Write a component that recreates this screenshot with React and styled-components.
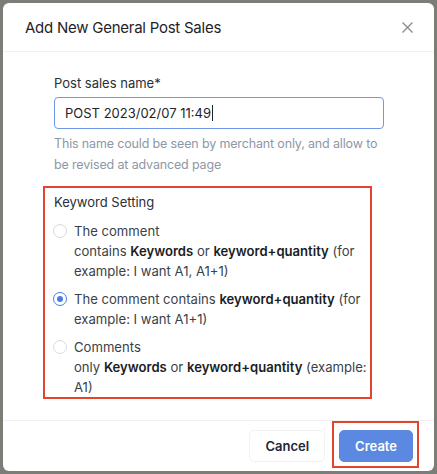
import React from "react";
import styled, { createGlobalStyle } from "styled-components";

const Global = createGlobalStyle`
  html, body { margin: 0; padding: 0; }
  body {
    background: #7d7d77;
    font-family: Inter, "Noto Sans", sans-serif;
    -webkit-font-smoothing: antialiased;
  }
`;

const Page = styled.div`
  width: 437px;
  height: 474px;
  box-sizing: border-box;
  padding: 3px 3px 3px 3px;
  display: flex;
`;

const Modal = styled.div`
  width: 431px;
  height: 468px;
  background: #ffffff;
  border-radius: 6px;
  display: flex;
  flex-direction: column;
  overflow: hidden;
`;

const Header = styled.div`
  height: 49px;
  box-sizing: border-box;
  padding: 0 18px 0 22px;
  display: flex;
  align-items: center;
  justify-content: space-between;
  border-bottom: 1px solid #eef0f3;
`;

const Title = styled.h2`
  margin: 0;
  font-size: 15px;
  font-weight: 400;
  letter-spacing: -0.25px;
  color: #1f2328;
`;

const CloseButton = styled.button`
  width: 18px;
  height: 18px;
  padding: 0;
  border: 0;
  background: transparent;
  display: flex;
  align-items: center;
  justify-content: center;
  color: #8a8a8a;
`;

const Body = styled.div`
  flex: 1;
  padding: 21px 50px 0 51px;
  display: flex;
  flex-direction: column;
`;

const Label = styled.label`
  font-size: 13px;
  line-height: 20px;
  color: #2a2f38;
`;

const Input = styled.div`
  margin-top: 4px;
  height: 32px;
  box-sizing: border-box;
  border: 1px solid #7098ea;
  border-radius: 4px;
  padding: 0 10px;
  display: flex;
  align-items: center;
  font-size: 13px;
  color: #1f2328;
`;

const Caret = styled.span`
  display: inline-block;
  width: 1px;
  height: 16px;
  background: #1f2328;
  margin-left: 1px;
`;

const Help = styled.p`
  margin: 4px 0 0;
  font-size: 12.5px;
  line-height: 21px;
  letter-spacing: -0.15px;
  color: #8e97a6;
`;

const KeywordSection = styled.div`
  position: relative;
  margin-top: 17px;
  display: flex;
  flex-direction: column;
  gap: 8px;

  &::after {
    content: "";
    position: absolute;
    left: -11px;
    right: 12px;
    top: -6px;
    bottom: -2px;
    border: 2px solid #e5432c;
    pointer-events: none;
  }
`;

const SectionTitle = styled.div`
  font-size: 13px;
  line-height: 20px;
  color: #2a2f38;
  margin-bottom: 1px;
`;

const Option = styled.label`
  display: flex;
  align-items: flex-start;
  gap: 7px;
  font-size: 13.1px;
  line-height: 20px;
  color: #3a3f48;

  b {
    font-weight: 600;
    color: #1a1d23;
  }
`;

const Radio = styled.span`
  flex: none;
  width: 14px;
  height: 14px;
  margin-top: 3px;
  margin-left: -1px;
  box-sizing: border-box;
  border-radius: 50%;
  border: 1px solid ${(p) => (p.$checked ? "#4a7ee6" : "#d6dbe2")};
  display: flex;
  align-items: center;
  justify-content: center;

  &::after {
    content: "";
    width: 6px;
    height: 6px;
    border-radius: 50%;
    background: ${(p) => (p.$checked ? "#4a7ee6" : "transparent")};
  }
`;

const Footer = styled.div`
  height: 51px;
  box-sizing: border-box;
  border-top: 1px solid #eef0f3;
  padding: 9px 21px 0 0;
  display: flex;
  justify-content: flex-end;
  align-items: flex-start;
  gap: 14px;
`;

const Button = styled.button`
  height: 32px;
  padding: 0 15px;
  border-radius: 5px;
  font-family: inherit;
  font-size: 13px;
  font-weight: 600;
  border: 1px solid ${(p) => (p.$primary ? "#5b88e0" : "#f1f2f4")};
  background: ${(p) => (p.$primary ? "#5b88e0" : "#ffffff")};
  color: ${(p) => (p.$primary ? "#ffffff" : "#1e2535")};
`;

const Highlight = styled.div`
  position: relative;
  display: flex;

  &::after {
    content: "";
    position: absolute;
    left: -7px;
    right: -6px;
    top: -9px;
    bottom: -6px;
    border: 2px solid #e5432c;
    pointer-events: none;
  }
`;

export default function App() {
  return (
    <>
      <Global />
      <Page>
        <Modal>
          <Header>
            <Title>Add New General Post Sales</Title>
            <CloseButton aria-label="close">
              <svg width="11" height="11" viewBox="0 0 11 11">
                <path d="M0.5 0.5 L10.5 10.5 M10.5 0.5 L0.5 10.5" stroke="currentColor" strokeWidth="1.3" />
              </svg>
            </CloseButton>
          </Header>
          <Body>
            <Label>Post sales name*</Label>
            <Input>
              POST 2023/02/07 11:49
              <Caret />
            </Input>
            <Help>
              This name could be seen by merchant only, and allow to be revised at advanced page
            </Help>
            <KeywordSection>
              <SectionTitle>Keyword Setting</SectionTitle>
              <Option>
                <Radio />
                <span>
                  The comment
                  <br />
                  contains <b>Keywords</b> or <b>keyword+quantity</b> (for example: I want A1, A1+1)
                </span>
              </Option>
              <Option>
                <Radio $checked />
                <span>
                  The comment contains <b>keyword+quantity</b> (for example: I want A1+1)
                </span>
              </Option>
              <Option>
                <Radio />
                <span>
                  Comments
                  <br />
                  only <b>Keywords</b> or <b>keyword+quantity</b> (example: A1)
                </span>
              </Option>
            </KeywordSection>
          </Body>
          <Footer>
            <Button>Cancel</Button>
            <Highlight>
              <Button $primary>Create</Button>
            </Highlight>
          </Footer>
        </Modal>
      </Page>
    </>
  );
}
